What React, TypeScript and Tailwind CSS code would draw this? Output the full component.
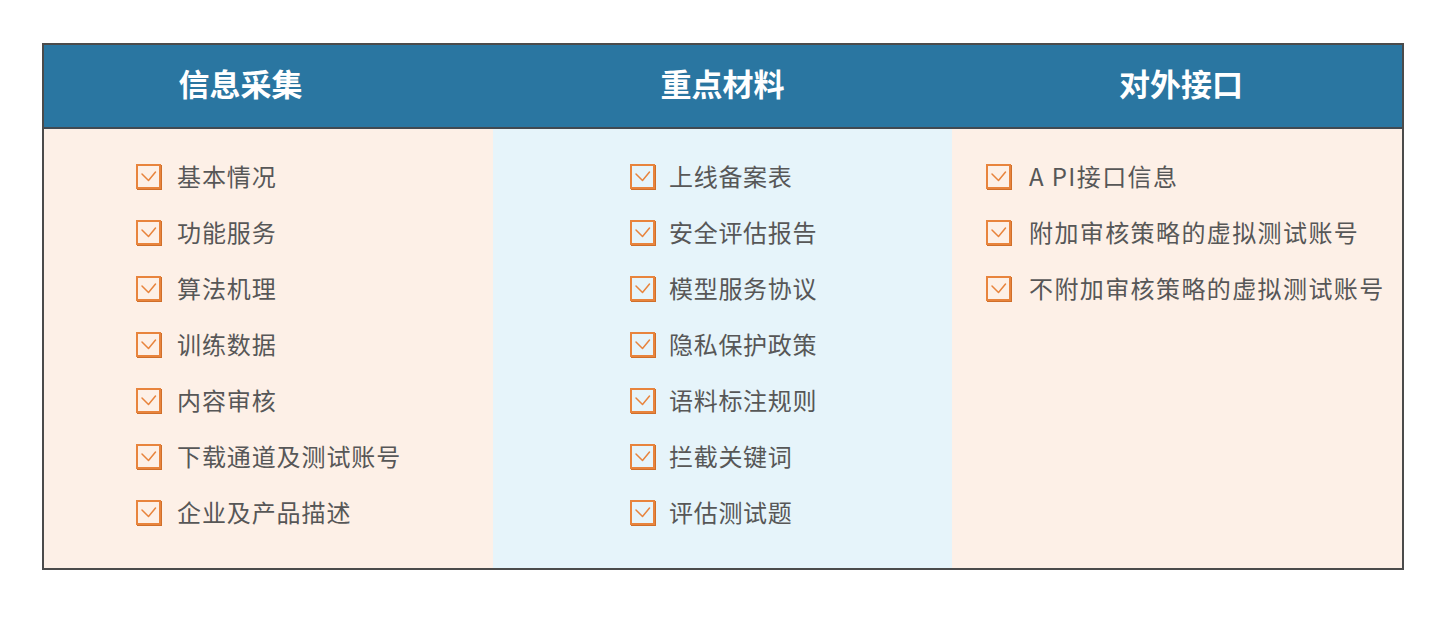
const columns = [
  {
    title: "信息采集",
    bg: "bg-[#fdf0e7]",
    pad: "pl-[92px]",
    gap: "gap-[16px]",
    track: "tracking-[0.9px]",
    items: ["基本情况", "功能服务", "算法机理", "训练数据", "内容审核", "下载通道及测试账号", "企业及产品描述"],
  },
  {
    title: "重点材料",
    bg: "bg-[#e6f4fa]",
    pad: "pl-[137px]",
    gap: "gap-[14px]",
    track: "tracking-[0.7px]",
    items: ["上线备案表", "安全评估报告", "模型服务协议", "隐私保护政策", "语料标注规则", "拦截关键词", "评估测试题"],
  },
  {
    title: "对外接口",
    bg: "bg-[#fdf0e7]",
    pad: "pl-[34px]",
    gap: "gap-[18px]",
    track: "tracking-[1.4px]",
    items: ["A PI接口信息", "附加审核策略的虚拟测试账号", "不附加审核策略的虚拟测试账号"],
  },
];

function CheckBox() {
  return (
    <div className="w-[25px] h-[25px] shrink-0 border-2 border-[#e8843d] shadow-[1px_1px_0_#d06f2a] flex items-center justify-center">
      <svg width="21" height="21" viewBox="0 0 21 21" fill="none">
        <path d="M4 8 L10.5 14.5 L17.5 6" stroke="#e8843d" strokeWidth="1.5" strokeLinecap="round" strokeLinejoin="round" />
      </svg>
    </div>
  );
}

export default function App() {
  return (
    <div
      className="w-[1448px] h-[620px] bg-white pt-[43px] pl-[42px]"
      style={{ fontFamily: '"Noto Sans CJK SC", "Noto Sans", sans-serif' }}>
      <div className="w-[1362px] border-2 border-[#4b4b4b]">
        <div className="grid grid-cols-[449px_459px_450px] h-[84px] bg-[#2a76a1] border-b-2 border-[#414a52] pb-[6px]">
          <div className="flex items-center justify-center pr-[56px] text-white font-bold text-[31px]">信息采集</div>
          <div className="flex items-center justify-center text-white font-bold text-[31px]">重点材料</div>
          <div className="flex items-center justify-center pl-[8px] text-white font-bold text-[31px]">对外接口</div>
        </div>
        <div className="grid grid-cols-[449px_459px_450px] h-[439px]">
          {columns.map((col) => (
            <div key={col.title} className={`${col.bg} ${col.pad} pt-[19px]`}>
              {col.items.map((item) => (
                <div key={item} className={`h-[56px] flex items-center ${col.gap}`}>
                  <CheckBox />
                  <span className={`text-[24px] text-[#575757] leading-none ${col.track}`}>{item}</span>
                </div>
              ))}
            </div>
          ))}
        </div>
      </div>
    </div>
  );
}
